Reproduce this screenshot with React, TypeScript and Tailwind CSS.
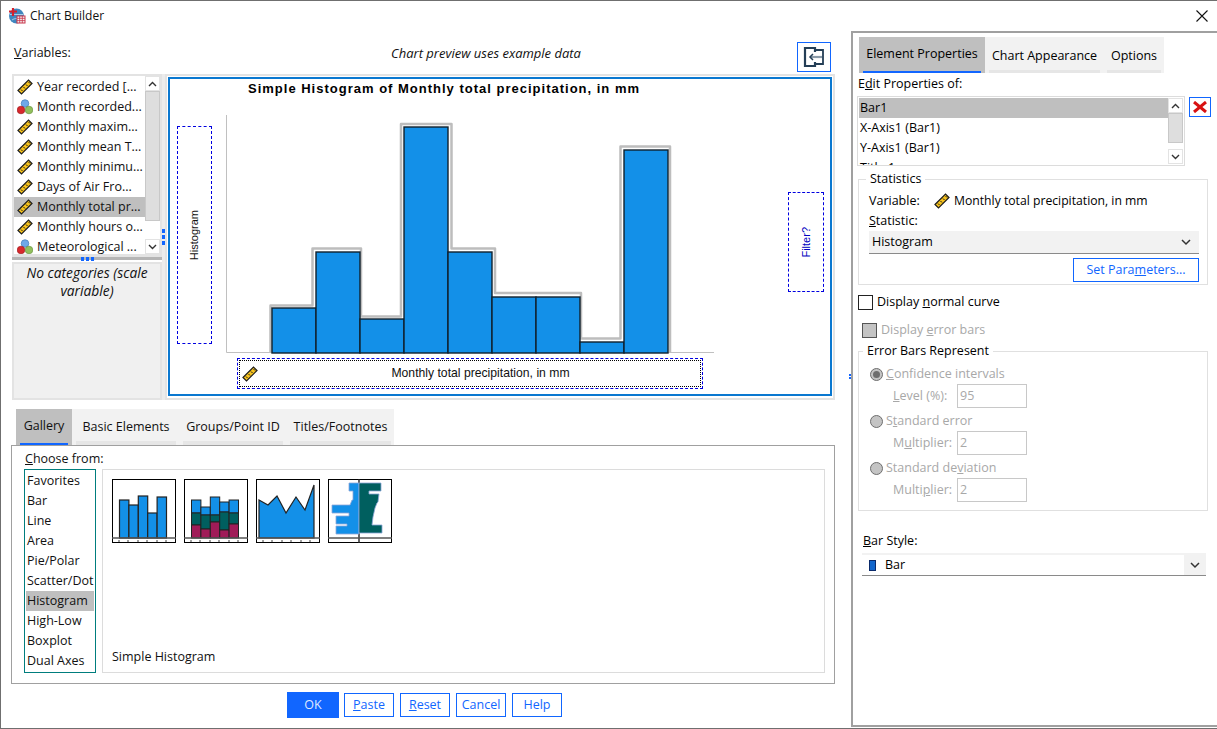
import type { ReactNode } from 'react';

const BLUE = '#1390e8';

function RulerIcon() {
  return (
    <svg width="16" height="16" viewBox="0 0 16 16" className="shrink-0">
      <path d="M1 11.5 11.500 1 15 4.500 4.500 15z" fill="#f6c21c" stroke="#1c1c1c" strokeWidth="1.2" />
      <path d="M4 10.500l1.500 1.500M6.500 8l1.500 1.500M9 5.500l1.500 1.500M11.500 3l1.500 1.500" stroke="#1c1c1c" strokeWidth="1" />
    </svg>
  );
}

function NominalIcon() {
  return (
    <svg width="16" height="16" viewBox="0 0 16 16" className="shrink-0">
      <circle cx="8" cy="4.500" r="3.800" fill="#6ea8e8" stroke="#3f78b8" strokeWidth="0.7" />
      <circle cx="4" cy="11" r="3.800" fill="#d8282c" stroke="#a01c20" strokeWidth="0.7" />
      <circle cx="12" cy="11" r="3.800" fill="#92c05c" stroke="#6a9440" strokeWidth="0.7" />
    </svg>
  );
}

function AppIcon() {
  return (
    <svg width="18" height="18" viewBox="0 0 18 18" className="shrink-0">
      <circle cx="8.500" cy="9" r="7.500" fill="#3f86bf" />
      <path d="M2 7.500h13M4 13c3-2 6-2 9 0" stroke="#a9cfe8" strokeWidth="1" fill="none" />
      <path d="M5 1v8M1 4.500h8" stroke="#d5202c" strokeWidth="2.200" />
      <rect x="9" y="9" width="8" height="7" fill="#f4f4f4" stroke="#c8344a" strokeWidth="1" />
      <path d="M11.700 9v7M14.300 9v7M9 11.300h8M9 13.600h8" stroke="#c8344a" strokeWidth="0.8" />
    </svg>
  );
}

function ScrollBar({ thumb }: { thumb: string }) {
  return (
    <div className="flex flex-col w-[15px] h-full shrink-0">
      <div className="h-[15px] border border-[#e3e3e3] flex items-center justify-center">
        <svg width="9" height="6" viewBox="0 0 9 6"><path d="M1 5l3.500-3.500L8 5" fill="none" stroke="#333" strokeWidth="1.400" /></svg>
      </div>
      <div className="flex-1 min-h-0">
        <div className={`${thumb} bg-[#dedede] border border-[#c8c8c8]`} />
      </div>
      <div className="h-[15px] border border-[#e3e3e3] flex items-center justify-center">
        <svg width="9" height="6" viewBox="0 0 9 6"><path d="M1 1l3.500 3.500L8 1" fill="none" stroke="#333" strokeWidth="1.400" /></svg>
      </div>
    </div>
  );
}

function Chevron() {
  return (
    <svg width="10" height="7" viewBox="0 0 10 7"><path d="M1 1l4 4 4-4" fill="none" stroke="#333" strokeWidth="1.500" /></svg>
  );
}

function ThumbFrame({ children, ticks = true }: { children: ReactNode; ticks?: boolean }) {
  return (
    <svg width="64" height="64" viewBox="0 0 64 64" className="shrink-0">
      <rect x="0.5" y="0.5" width="63" height="63" fill="#fff" stroke="#000" />
      {children}
      <path d="M0 59h64" stroke="#555" strokeWidth="1.600" />
      {ticks && <path d="M7 61v2M16 61v2M26 61v2M35 61v2M45 61v2M54 61v2" stroke="#444" strokeWidth="1" />}
    </svg>
  );
}

const thumbTops = [21, 26, 17, 34, 18];

function SimpleBars() {
  return (
    <ThumbFrame>
      {thumbTops.map((t, i) => (
        <rect key={i} x={7.5 + i * 9.4} y={t} width={9.4} height={59 - t} fill={BLUE} stroke="#222" strokeWidth="1.200" />
      ))}
    </ThumbFrame>
  );
}

const stacked = [
  [21, 34, 46],
  [28, 36, 50],
  [18, 36, 43],
  [23, 33, 51],
  [21, 34, 45],
];

function StackedBars() {
  return (
    <ThumbFrame>
      {stacked.map(([a, b, c], i) => (
        <g key={i} stroke="#222" strokeWidth="1">
          <rect x={7.5 + i * 9.4} y={a} width={9.4} height={b - a} fill={BLUE} />
          <rect x={7.5 + i * 9.4} y={b} width={9.4} height={c - b} fill="#005f5f" />
          <rect x={7.5 + i * 9.4} y={c} width={9.4} height={59 - c} fill="#a01c58" />
        </g>
      ))}
    </ThumbFrame>
  );
}

function AreaThumb() {
  return (
    <ThumbFrame>
      <path d="M3 21l9 5 9-9 9 17 10-16 9 13 9-25v53H3z" fill={BLUE} stroke="#222" strokeWidth="1.200" />
    </ThumbFrame>
  );
}

function PyramidThumb() {
  return (
    <ThumbFrame ticks={false}>
      <path d="M31 0v64" stroke="#222" strokeWidth="1.400" />
      <path d="M31 4H21v8h4v9h-1l-2 5H4v8h17v3H8v8h11v2H8v8h23z" fill={BLUE} stroke="#8ea6d8" strokeWidth="0.8" />
      <path d="M31 4h22v8H41v3h10l-1 8-1 1-2 5-2 9-1 8h10v8H31z" fill="#005f5f" stroke="#8ea6d8" strokeWidth="0.8" />
    </ThumbFrame>
  );
}

const variables: { label: string; kind: 'ruler' | 'nominal'; selected?: boolean }[] = [
  { label: 'Year recorded [...', kind: 'ruler' },
  { label: 'Month recorded...', kind: 'nominal' },
  { label: 'Monthly maxim...', kind: 'ruler' },
  { label: 'Monthly mean T...', kind: 'ruler' },
  { label: 'Monthly minimu...', kind: 'ruler' },
  { label: 'Days of Air Fro...', kind: 'ruler' },
  { label: 'Monthly total pr...', kind: 'ruler', selected: true },
  { label: 'Monthly hours o...', kind: 'ruler' },
  { label: 'Meteorological ...', kind: 'nominal' },
];

function VariablePanel() {
  return (
    <div className="w-[150px] shrink-0 flex flex-col">
      <div className="h-[182px] border-2 border-[#e3e3e3] flex overflow-hidden">
        <div className="flex-1 min-w-0 pt-px">
          {variables.map((v) => (
            <div key={v.label} className={`h-5 flex items-center gap-[4px] pl-[3px] whitespace-nowrap ${v.selected ? 'bg-[#bfbfbf]' : ''}`}>
              {v.kind === 'ruler' ? <RulerIcon /> : <NominalIcon />}
              <span>{v.label}</span>
            </div>
          ))}
        </div>
        <ScrollBar thumb="h-[130px]" />
      </div>
      <div className="h-[4px] bg-[#b5b5b5] border-t border-[#e3e3e3] flex justify-center gap-[2px] items-center">
        <span className="w-[3px] h-[4px] bg-[#1166ff]" />
        <span className="w-[3px] h-[4px] bg-[#1166ff]" />
        <span className="w-[3px] h-[4px] bg-[#1166ff]" />
      </div>
      <div className="flex-1 mt-[2px] border-2 border-[#e3e3e3] bg-[#f0f0f0] text-center italic text-[13.8px] leading-[18px]">
        No categories (scale variable)
      </div>
    </div>
  );
}

const bars = [308, 252, 319, 127, 252, 297, 297, 342, 150];

function ChartPreview() {
  const outline =
    'M270.500 353V305.500H312.500V248.500H361V316.500H401V124H451.500V248.500H495V293H581V338.500H620.500V146.500H670V353';
  return (
    <div className="flex-1 border-2 border-[#e3e3e3] p-px pb-[2px]">
      <div className="relative h-full border-2 border-[#0a78d0]">
        <svg className="absolute inset-0 w-[660px] h-[315px]" viewBox="170 79 660 315">
          <path d="M226.500 115V352.500H714" fill="none" stroke="#c0c0c0" />
          <path d={outline} fill="none" stroke="#bdbdbd" strokeWidth="2.500" strokeLinejoin="round" />
          {bars.map((top, i) => (
            <rect key={i} x={272 + i * 44} y={top} width={44} height={353 - top} fill={BLUE} stroke="#10202c" strokeWidth="1.400" />
          ))}
        </svg>
        <div className="absolute left-[78px] top-[2px] font-['Liberation_Sans',sans-serif] font-bold text-[13px] tracking-[1px] leading-4 whitespace-nowrap text-black">
          Simple Histogram of Monthly total precipitation, in mm
        </div>
        <div className="absolute left-[7px] top-[47px] w-[35px] h-[218px] border border-dashed border-[#0000e0] flex items-center justify-center">
          <span className="[writing-mode:vertical-rl] rotate-180 font-['Liberation_Sans',sans-serif] text-[11px]">Histogram</span>
        </div>
        <div className="absolute left-[618px] top-[113px] w-[36px] h-[100px] border border-dashed border-[#0000e0] flex items-center justify-center">
          <span className="[writing-mode:vertical-rl] rotate-180 font-['Liberation_Sans',sans-serif] text-[11px] text-[#0000c0]">Filter?</span>
        </div>
        <div className="absolute left-[67px] top-[279px] w-[466px] h-[31px] border border-dashed border-[#0000e0] p-px">
          <div className="h-full border border-dotted border-black flex items-center pl-[2px]">
            <RulerIcon />
            <span className="flex-1 text-center pl-[3px] font-['Liberation_Sans',sans-serif] text-[12.2px]">Monthly total precipitation, in mm</span>
          </div>
        </div>
      </div>
    </div>
  );
}

const galleryTabs = [
  { label: 'Basic Elements', box: 'w-[108px] pl-[4px] pr-[4px]' },
  { label: 'Groups/Point ID', box: 'w-[107px] pl-[3px] pr-[4px]' },
  { label: 'Titles/Footnotes', box: 'w-[107px] pl-[3px] pr-[3px]' },
];

const categories = ['Favorites', 'Bar', 'Line', 'Area', 'Pie/Polar', 'Scatter/Dot', 'Histogram', 'High-Low', 'Boxplot', 'Dual Axes'];

function Gallery() {
  return (
    <div className="ml-[10px] w-[824px] h-[239px] border border-[#a0a0a0] pt-[4px] pl-[12px] pr-[9px]">
      <div className="h-[19px] leading-[18px] pl-[1px]"><u>C</u>hoose from:</div>
      <div className="flex gap-[6px]">
        <div className="w-[72px] h-[204px] border border-[#007d7d] p-px">
          {categories.map((c) => (
            <div key={c} className={`h-5 leading-5 pl-[1px] whitespace-nowrap ${c === 'Histogram' ? 'bg-[#bfbfbf]' : ''}`}>{c}</div>
          ))}
        </div>
        <div className="flex-1 h-[204px] border border-[#dcdcdc] pl-[9px] pt-[9px] flex flex-col justify-between pb-[6px]">
          <div className="flex gap-2">
            <SimpleBars />
            <StackedBars />
            <AreaThumb />
            <PyramidThumb />
          </div>
          <div className="leading-[18px]">Simple Histogram</div>
        </div>
      </div>
    </div>
  );
}

function DialogButton({ children }: { children: ReactNode }) {
  return (
    <div className="w-[50px] h-[24px] border border-[#1166ff] text-[#1166ff] flex items-center justify-center">{children}</div>
  );
}

function LeftColumn() {
  return (
    <div className="relative w-[850px] shrink-0 flex flex-col">
      <div className="flex h-[30px] mt-[12px] pl-[13px]">
        <div className="w-[153px] pt-[1px] leading-[20px]"><u>V</u>ariables:</div>
        <div className="w-[630px] pl-[8px] text-center italic pt-[1px] leading-[20px] text-[13px]">Chart preview uses example data</div>
        <div className="w-[34px] h-[30px] border border-[#1166ff] flex items-center justify-center">
          <svg width="22" height="22" viewBox="0 0 22 22">
            <path d="M12 6V2H2v18h10v-4" fill="none" stroke="#243e56" strokeWidth="2.200" />
            <path d="M12 4h8v14h-8" fill="none" stroke="#243e56" strokeWidth="1.800" />
            <path d="M19 11H8" stroke="#8a9aa8" strokeWidth="2.200" />
            <path d="M10 8l-3 3 3 3" fill="none" stroke="#243e56" strokeWidth="1.500" />
          </svg>
        </div>
      </div>
      <div className="flex ml-[11px] w-[823px] h-[326px] mt-[2px]">
        <VariablePanel />
        <div className="w-[3px] bg-[#ececec] flex flex-col gap-[2px] pt-[155px] items-center shrink-0">
          <span className="w-[3px] h-[4px] bg-[#1166ff]" />
          <span className="w-[3px] h-[4px] bg-[#1166ff]" />
          <span className="w-[3px] h-[4px] bg-[#1166ff]" />
        </div>
        <ChartPreview />
      </div>
      <div className="flex ml-[15px] mt-[9px] h-[36px]">
        <div className="w-[56px] bg-[#bfbfbf] flex flex-col px-[4px]">
          <div className="flex-1 flex items-center justify-center pt-[1px]">Gallery</div>
          <div className="h-[2px] bg-[#1166ff]" />
        </div>
        {galleryTabs.map((t) => (
          <div key={t.label} className={`${t.box} bg-[#f2f2f2] flex flex-col`}>
            <div className="flex-1 flex items-center justify-center pt-[4px] whitespace-nowrap">{t.label}</div>
            <div className="h-[4px] bg-[#e6e6e6]" />
          </div>
        ))}
      </div>
      <Gallery />
      <div className="flex items-center h-[26px] mt-[8px] pl-[286px] gap-[6px]">
        <div className="w-[52px] h-[26px] bg-[#1166ff] text-[#dfe9ff] flex items-center justify-center mr-[-1px]">OK</div>
        <DialogButton><u>P</u>aste</DialogButton>
        <DialogButton><u>R</u>eset</DialogButton>
        <DialogButton>Cancel</DialogButton>
        <DialogButton>Help</DialogButton>
      </div>
      <div className="absolute right-0 top-[344px] flex flex-col gap-px">
        <span className="w-[2px] h-[2px] bg-[#1166ff]" />
        <span className="w-[2px] h-[2px] bg-[#1166ff]" />
      </div>
    </div>
  );
}

function ErrorOption({ label, field, value, checked }: { label: ReactNode; field: ReactNode; value: string; checked?: boolean }) {
  return (
    <div className="h-[47px]">
      <div className="flex items-center h-[20px] gap-[3px] pl-[11px]">
        <span className="w-[13px] h-[13px] rounded-full bg-[#c4c4c4] border border-[#6e6e6e] flex items-center justify-center">
          {checked && <span className="w-[7px] h-[7px] rounded-full bg-[#6e6e6e]" />}
        </span>
        <span>{label}</span>
      </div>
      <div className="flex items-center h-[24px] pl-[34px]">
        <span className="w-[64px]">{field}</span>
        <span className="w-[70px] h-[24px] border border-[#c8c8c8] pl-[2px] leading-[22px]">{value}</span>
      </div>
    </div>
  );
}

function RightColumn() {
  return (
    <div className="flex-1 border-l-2 border-t-2 border-b-2 border-[#a0a0a0] mt-[1px] mb-[1px] text-black">
      <div className="flex ml-[6px] mt-[4px] h-[36px]">
        <div className="w-[126px] bg-[#bfbfbf] flex flex-col px-[4px]">
          <div className="flex-1 flex items-center justify-center pt-[1px] whitespace-nowrap">Element Properties</div>
          <div className="h-[2px] bg-[#1166ff]" />
        </div>
        <div className="w-[119px] bg-[#f2f2f2] flex flex-col px-[4px]">
          <div className="flex-1 flex items-center justify-center pt-[5px] whitespace-nowrap">Chart Appearance</div>
          <div className="h-[3px] bg-[#e6e6e6]" />
        </div>
        <div className="w-[60px] bg-[#f2f2f2] flex flex-col px-[3px]">
          <div className="flex-1 flex items-center justify-center pt-[5px]">Options</div>
          <div className="h-[3px] bg-[#e6e6e6]" />
        </div>
      </div>
      <div className="h-[19px] leading-[20px] pl-[5px] mt-px">E<u>d</u>it Properties of:</div>
      <div className="flex ml-[4px] mt-[3px] gap-[4px]">
        <div className="w-[328px] h-[70px] border border-[#dcdcdc] p-px flex overflow-hidden">
          <div className="flex-1 min-w-0">
            <div className="h-5 leading-5 bg-[#bfbfbf] pl-px">Bar1</div>
            <div className="h-5 leading-5 pl-px">X-Axis1 (Bar1)</div>
            <div className="h-5 leading-5 pl-px">Y-Axis1 (Bar1)</div>
            <div className="h-5 leading-5 pl-px">Title 1</div>
          </div>
          <ScrollBar thumb="h-[30px]" />
        </div>
        <div className="w-[22px] h-[20px] mt-px border border-[#1166ff] flex items-center justify-center">
          <svg width="14" height="12" viewBox="0 0 14 12"><path d="M1 1l12 10M13 1L1 11" stroke="#d81212" strokeWidth="3" /></svg>
        </div>
      </div>
      <fieldset className="ml-[5px] w-[350px] h-[114px] mt-[5px] border border-[#e0e0e0] pl-[10px] pr-[8px]">
        <legend className="ml-[-3px] px-[4px] leading-[16px]">Statistics</legend>
        <div className="flex items-center h-[20px] mt-[4px]">
          <span className="w-[65px]">Variable:</span>
          <RulerIcon />
          <span className="ml-[4px] text-[12.2px]">Monthly total precipitation, in mm</span>
        </div>
        <div className="h-[20px] leading-[20px]"><u>S</u>tatistic:</div>
        <div className="h-[23px] bg-[#f2f2f2] border-b border-[#8a8a8a] flex items-center justify-between pl-[3px] pr-[8px]">
          <span>Histogram</span>
          <Chevron />
        </div>
        <div className="w-[126px] h-[24px] ml-[204px] mt-[4px] border border-[#1166ff] text-[#1166ff] flex items-center justify-center">Set Para<u>m</u>eters...</div>
      </fieldset>
      <div className="flex items-center h-[20px] mt-[7px] pl-[5px] gap-[4px]">
        <span className="w-[15px] h-[15px] border border-[#222] bg-white" />
        <span>Display <u>n</u>ormal curve</span>
      </div>
      <div className="flex items-center h-[20px] mt-[8px] pl-[9px] gap-[4px] text-[#a8a8a8]">
        <span className="w-[15px] h-[15px] border border-[#555] bg-[#c4c4c4]" />
        <span>Display <u>e</u>rror bars</span>
      </div>
      <fieldset className="ml-[5px] w-[350px] h-[168px] mt-[3px] border border-[#e0e0e0] text-[#a8a8a8]">
        <legend className="ml-[4px] px-[4px] leading-[16px] text-black">Error Bars Represent</legend>
        <div className="pt-[5px]">
          <ErrorOption label={<><u>C</u>onfidence intervals</>} field={<><u>L</u>evel (%):</>} value="95" checked />
          <ErrorOption label={<>S<u>t</u>andard error</>} field={<>M<u>u</u>ltiplier:</>} value="2" />
          <ErrorOption label={<>Standard de<u>v</u>iation</>} field={<>Multi<u>p</u>lier:</>} value="2" />
        </div>
      </fieldset>
      <div className="h-[20px] leading-[20px] pl-[10px] mt-[20px]"><u>B</u>ar Style:</div>
      <div className="ml-[9px] w-[344px] h-[23px] mt-[2px] bg-[#f2f2f2] border-b border-[#8a8a8a] flex pt-[2px]">
        <div className="flex-1 bg-white flex items-center gap-[9px] pl-[7px]">
          <span className="w-[7px] h-[11px] bg-[#1166cc] border border-[#0a2a6a]" />
          <span>Bar</span>
        </div>
        <div className="w-[22px] flex items-center justify-center"><Chevron /></div>
      </div>
    </div>
  );
}

export default function App() {
  return (
    <div className="w-[1217px] h-[729px] bg-white border-l border-t border-b border-[#6f6f6f] flex flex-col overflow-hidden font-['Open_Sans','Noto_Sans',sans-serif] text-[12.5px] text-[#111]">
      <div className="h-[29px] shrink-0 flex items-center pl-[7px] pr-[9px] gap-[4px]">
        <AppIcon />
        <span className="flex-1 text-[12px]">Chart Builder</span>
        <svg width="12" height="12" viewBox="0 0 12 12"><path d="M.5.5l11 11M11.500.5l-11 11" stroke="#111" strokeWidth="1.100" /></svg>
      </div>
      <div className="flex flex-1 min-h-0">
        <LeftColumn />
        <RightColumn />
      </div>
    </div>
  );
}
